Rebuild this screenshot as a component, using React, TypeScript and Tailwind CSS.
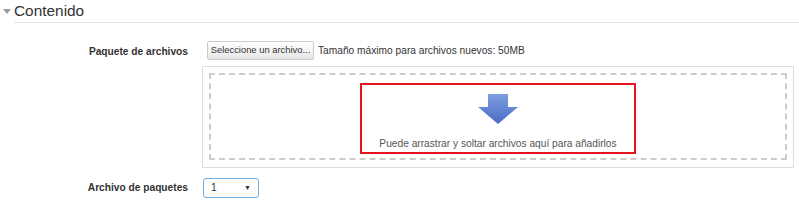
import React from 'react';

const DropArrow = () => (
  <svg width="42" height="30" viewBox="0 0 42 30" className="shrink-0">
    <defs>
      <linearGradient id="arrowFill" x1="0" y1="0" x2="0" y2="1">
        <stop offset="0" stopColor="#7d9ee0" />
        <stop offset="1" stopColor="#4a6cc4" />
      </linearGradient>
    </defs>
    <path d="M11 0 H31 V13 H41 L21 30 L1 13 H11 Z" fill="url(#arrowFill)" />
  </svg>
);

const App = () => {
  return (
    <div className="w-[799px] h-[205px] overflow-hidden bg-white text-[#333] font-['Liberation_Sans',Arial,sans-serif]">
      {/* Section header */}
      <div className="flex items-center h-[21px] pl-[3px]">
        <span className="w-0 h-0 border-l-[4px] border-r-[4px] border-t-[5px] border-l-transparent border-r-transparent border-t-[#999] mr-[3px] mt-[1px]" />
        <span className="text-[15.4px] leading-none">Contenido</span>
      </div>
      <div className="ml-[14px] mt-[1px] border-b border-[#e5e5e5]" />

      {/* File package */}
      <div className="flex mt-[18px]">
        <div className="w-[188px] shrink-0 text-right text-[10.2px] font-bold pt-[3px] whitespace-nowrap">Paquete de archivos</div>
        <div className="ml-[14px] flex-1">
          <div className="flex items-center ml-[5px]">
            <button className="h-[19px] w-[107px] shrink-0 border border-[#ccc] rounded-[2px] bg-gradient-to-b from-white to-[#e6e6e6] text-[9.4px] text-[#333] whitespace-nowrap">
              Seleccione un archivo...
            </button>
            <span className="ml-[4px] text-[10.2px] text-[#333] whitespace-nowrap">Tamaño máximo para archivos nuevos: 50MB</span>
          </div>
          <div className="mt-[6px] w-[592px] border border-[#ddd] pt-[6px] px-[6px] pb-[7px]">
            <div className="border-2 border-dashed border-[#ccc] flex justify-center pt-[8px] pb-[4px]">
              <div className="w-[276px] h-[71px] border-2 border-[#e8141d] flex flex-col items-center pt-[9px]">
                <DropArrow />
                <span className="mt-[12px] text-[10.2px] text-[#555] whitespace-nowrap">Puede arrastrar y soltar archivos aquí para añadirlos</span>
              </div>
            </div>
          </div>
        </div>
      </div>

      {/* Package file */}
      <div className="flex items-center mt-[10px]">
        <div className="w-[188px] shrink-0 text-right text-[10.2px] font-bold whitespace-nowrap">Archivo de paquetes</div>
        <div className="ml-[15px] w-[56px] h-[20px] border border-[#66afe9] rounded-[3px] flex items-center justify-between px-[7px] text-[10.2px]">
          <span>1</span>
          <span className="text-[7px] text-[#333]">▼</span>
        </div>
      </div>
    </div>
  );
};

export default App;
